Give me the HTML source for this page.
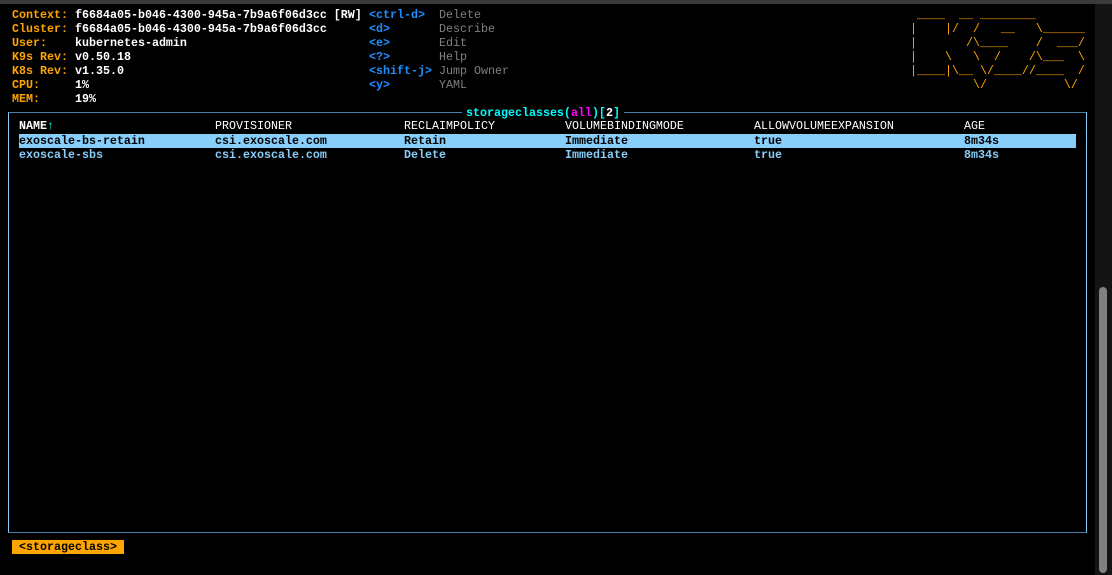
<!DOCTYPE html>
<html><head><style>
body{margin:0;width:1112px;height:575px;background:#000;overflow:hidden;position:relative;font-family:"Liberation Mono",monospace;font-size:11.67px;font-weight:bold;}
.t{position:absolute;white-space:pre;line-height:14px;}
.o{color:#ffa500}.w{color:#fff}.b{color:#1e90ff}.g{color:#808080;font-weight:normal}
.c{color:#87cefa}
</style></head><body>
<div style="position:absolute;left:0;top:0;width:1112px;height:4px;background:#3a3a3a"></div>
<div class="t o" style="left:12px;top:8px">Context:
Cluster:
User:
K9s Rev:
K8s Rev:
CPU:
MEM:</div>
<div class="t w" style="left:75px;top:8px">f6684a05-b046-4300-945a-7b9a6f06d3cc [RW]
f6684a05-b046-4300-945a-7b9a6f06d3cc
kubernetes-admin
v0.50.18
v1.35.0
1%
19%</div>
<div class="t b" style="left:369px;top:8px">&lt;ctrl-d&gt;
&lt;d&gt;
&lt;e&gt;
&lt;?&gt;
&lt;shift-j&gt;
&lt;y&gt;</div>
<div class="t g" style="left:439px;top:8px">Delete
Describe
Edit
Help
Jump Owner
YAML</div>
<div class="t o" style="left:910px;top:8px;font-weight:normal"> ____  __ ________
|    |/  /   __   \______
|       /\____    /  ___/
|    \   \  /    /\___  \
|____|\__ \/____//____  /
         \/           \/</div>
<div style="position:absolute;left:8px;top:112px;width:1077px;height:419px;border:1px solid #4a7fa8;border-left-color:#87cefa;border-right-color:#87cefa"></div>
<div class="t" style="left:462px;top:106px;background:#000;padding:0 4px"><span style="color:#00ffff">storageclasses(</span><span style="color:#ff00ff">all</span><span style="color:#00ffff">)[</span><span class="w">2</span><span style="color:#00ffff">]</span></div>
<div style="position:absolute;left:19px;top:134px;width:1057px;height:14px;background:#87cefa"></div>
<div class="t w" style="left:19px;top:119px">NAME<span style="color:#00ffff">↑</span></div>
<div class="t w" style="left:215px;top:119px;font-weight:normal">PROVISIONER</div>
<div class="t w" style="left:404px;top:119px;font-weight:normal">RECLAIMPOLICY</div>
<div class="t w" style="left:565px;top:119px;font-weight:normal">VOLUMEBINDINGMODE</div>
<div class="t w" style="left:754px;top:119px;font-weight:normal">ALLOWVOLUMEEXPANSION</div>
<div class="t w" style="left:964px;top:119px;font-weight:normal">AGE</div>
<div class="t" style="left:19px;top:134px;color:#000">exoscale-bs-retain</div>
<div class="t" style="left:215px;top:134px;color:#000">csi.exoscale.com</div>
<div class="t" style="left:404px;top:134px;color:#000">Retain</div>
<div class="t" style="left:565px;top:134px;color:#000">Immediate</div>
<div class="t" style="left:754px;top:134px;color:#000">true</div>
<div class="t" style="left:964px;top:134px;color:#000">8m34s</div>
<div class="t c" style="left:19px;top:148px">exoscale-sbs</div>
<div class="t c" style="left:215px;top:148px">csi.exoscale.com</div>
<div class="t c" style="left:404px;top:148px">Delete</div>
<div class="t c" style="left:565px;top:148px">Immediate</div>
<div class="t c" style="left:754px;top:148px">true</div>
<div class="t c" style="left:964px;top:148px">8m34s</div>
<div class="t" style="left:12px;top:540px;width:112px;height:14px;background:#ffa500;color:#000;text-align:center">&lt;storageclass&gt;</div>
<div style="position:absolute;left:1095px;top:4px;width:17px;height:571px;background:#141414"></div>
<div style="position:absolute;left:1099px;top:287px;width:8px;height:286px;background:#808080;border-radius:4px"></div>
</body></html>
